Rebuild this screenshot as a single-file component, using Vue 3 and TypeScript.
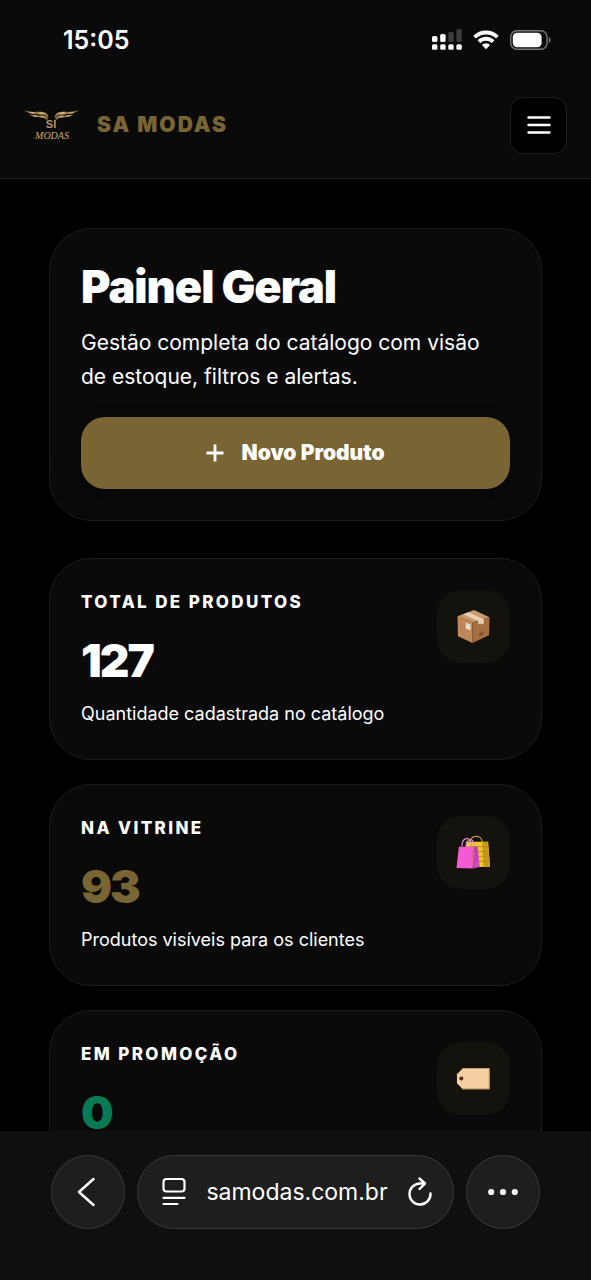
<script setup lang="ts">
import { ref } from 'vue'

type Tone = 'light' | 'gold' | 'green'
type Icon = 'box' | 'bags' | 'tag'

interface Stat {
  label: string
  value: number
  note?: string
  tone: Tone
  icon: Icon
}

const stats: Stat[] = [
  { label: 'Total de produtos', value: 127, note: 'Quantidade cadastrada no catálogo', tone: 'light', icon: 'box' },
  { label: 'Na vitrine', value: 93, note: 'Produtos visíveis para os clientes', tone: 'gold', icon: 'bags' },
  { label: 'Em promoção', value: 0, tone: 'green', icon: 'tag' },
]

const address = ref('samodas.com.br')
</script>

<template>
  <div class="screen">
    <div class="status">
      <time class="clock">15:05</time>
      <div class="indicators">
        <svg class="signal" viewBox="0 0 30 22" aria-hidden="true">
          <g fill="#fff">
            <rect x="0" y="7" width="5.4" height="6" rx="1.6" />
            <rect x="8.2" y="5" width="5.4" height="8" rx="1.6" />
            <rect x="0" y="15.2" width="5.4" height="5.6" rx="1.6" />
            <rect x="8.2" y="15.2" width="5.4" height="5.6" rx="1.6" />
            <rect x="16.3" y="15.2" width="5.4" height="5.6" rx="1.6" />
            <rect x="24.4" y="15.2" width="5.4" height="5.6" rx="1.6" />
          </g>
          <g fill="#3c3c3c">
            <rect x="16.3" y="3" width="5.4" height="10" rx="1.6" />
            <rect x="24.4" y="0" width="5.4" height="13" rx="1.6" />
          </g>
        </svg>
        <svg class="wifi" viewBox="0 0 26 20" aria-hidden="true">
          <g fill="none" stroke="#fff" stroke-width="3.8">
            <path d="M1.6 7.2a16.2 16.2 0 0 1 22.8 0" />
            <path d="M5.9 11.7a10 10 0 0 1 14.2 0" />
          </g>
          <path d="M8.9 14.9a5.9 5.9 0 0 1 8.2 0L13 19.2z" fill="#fff" />
        </svg>
        <svg class="battery" viewBox="0 0 41 20" aria-hidden="true">
          <rect x=".7" y=".7" width="36.4" height="18.6" rx="6.2" fill="none" stroke="#777" stroke-width="1.4" />
          <rect x="2.8" y="2.8" width="28.8" height="14.4" rx="4.2" fill="#fff" />
          <path d="M38.8 7v6c2.4-1 2.4-5 0-6z" fill="#777" />
        </svg>
      </div>
    </div>

    <header class="topbar">
      <a class="brand" href="#">
        <svg class="logo" viewBox="0 0 56 34" aria-hidden="true">
          <defs>
            <linearGradient id="gold" x1="0" x2="1" y1="0" y2="0">
              <stop offset="0" stop-color="#7d6330" />
              <stop offset=".35" stop-color="#d9bd82" />
              <stop offset=".5" stop-color="#8a6c36" />
              <stop offset=".7" stop-color="#cfb073" />
              <stop offset="1" stop-color="#8a6c36" />
            </linearGradient>
          </defs>
          <g fill="url(#gold)">
            <path d="M0 2c7 3.600 16 .6 21 2.600 3 1.400 4 3.400 3 6-1.500-3-3-3.600-7-4C12 6.200 5 6.200 0 2z" />
            <path d="M5 6c6 2.200 12 .8 16 2.200 2.600 1 3 2.600 2.400 4.600-1.600-2.600-3.400-3.200-6.400-3.400C11.500 9.300 8.500 9 5 6z" />
            <path d="M55 2c-7 3.600-16 .6-21 2.600-3 1.400-4 3.400-3 6 1.500-3 3-3.600 7-4C43 6.200 50 6.200 55 2z" />
            <path d="M50 6c-6 2.200-12 .8-16 2.200-2.600 1-3 2.600-2.400 4.600 1.600-2.600 3.400-3.200 6.400-3.400 5.500-.1 8.500-.4 12-3.400z" />
          </g>
          <text class="logo-mark" x="27" y="20" text-anchor="middle">SI</text>
          <text class="logo-name" x="28" y="31" text-anchor="middle">MODAS</text>
        </svg>
        <span class="brand-name">SA MODAS</span>
      </a>
      <button class="menu" type="button" aria-label="Abrir menu">
        <svg viewBox="0 0 24 20" aria-hidden="true">
          <path d="M1.500 2.500h21M1.500 10h21M1.500 17.500h21" fill="none" stroke="#fff" stroke-width="2.400" stroke-linecap="round" />
        </svg>
      </button>
    </header>

    <main class="content">
      <section class="card intro">
        <h1>Painel Geral</h1>
        <p>Gestão completa do catálogo com visão de estoque, filtros e alertas.</p>
        <button class="primary" type="button">
          <svg viewBox="0 0 18 18" aria-hidden="true">
            <path d="M9 .5v17M.5 9h17" fill="none" stroke="#fff" stroke-width="2.800" />
          </svg>
          <span>Novo Produto</span>
        </button>
      </section>

      <section class="stats">
        <article v-for="stat in stats" :key="stat.label" class="card stat">
          <div class="figures">
            <h2>{{ stat.label }}</h2>
            <strong :class="stat.tone">{{ stat.value }}</strong>
            <p v-if="stat.note">{{ stat.note }}</p>
          </div>
          <div class="tile">
            <svg v-if="stat.icon === 'box'" viewBox="0 0 36 36" aria-hidden="true">
              <path d="M1.500 7.500 17 13.500V35L2 28z" fill="#bd8757" />
              <path d="M17 13.500 34.500 8.500 34 27 17 35z" fill="#a56f42" />
              <path d="M1.500 7.500 18.500 1 34.500 8.500 17 13.500z" fill="#c99a6c" />
              <path d="m7.500 5.500 5.500-2.200 15.500 7.200v4.500l-2 1-1.500-1-2 1v-3.700z" fill="#e8d0b4" />
              <path d="m10 14 5 2v6l-5-2z" fill="#e6dccd" />
              <path d="m24 25 4-2v3l-4 2z" fill="#7c4c2b" />
              <path d="M17 13.500V35" stroke="#8b5a34" stroke-width=".8" />
            </svg>
            <svg v-else-if="stat.icon === 'bags'" viewBox="0 0 36 36" aria-hidden="true">
              <path d="M14 8c1-8 12-9 13-1" fill="none" stroke="#c0903a" stroke-width="1.300" />
              <path d="M10 7h23l2 26H14z" fill="#f0c72d" />
              <path d="M27 7h6l2 26h-7z" fill="#c79a1e" />
              <path d="M14 12h19M15 17h18M16 22h18M17 27h17" stroke="#b88919" stroke-width=".9" />
              <path d="M6 12c0-10 9-12 10-1M10 12c1-9 8-10 9-1" fill="none" stroke="#d894bd" stroke-width="1.300" />
              <path d="M3 12h14v22.500L.5 34z" fill="#f45ad3" />
              <path d="M17 12h5.500l2 21-7.500 1.500z" fill="#d14abd" />
              <path d="m20 12 1 11-4 11.500" fill="none" stroke="#9d3089" stroke-width=".8" />
            </svg>
            <svg v-else viewBox="0 0 36 36" aria-hidden="true">
              <path d="M7 7.500h27.500v21.500H7l-6-6v-9.500z" fill="#f5cfa0" />
              <path d="M34 8v20.500H7" fill="none" stroke="#c99b69" stroke-width="1" />
              <circle cx="5.500" cy="18" r="2.100" fill="#5b2618" />
            </svg>
          </div>
        </article>
      </section>
    </main>

    <nav class="browser" aria-label="Navegador">
      <button class="round" type="button" aria-label="Voltar">
        <svg viewBox="0 0 30 30" aria-hidden="true">
          <path d="M20.500 2 6 15l14.500 13" fill="none" stroke="#fff" stroke-width="2.500" stroke-linecap="round" stroke-linejoin="round" />
        </svg>
      </button>
      <div class="address">
        <button class="tool" type="button" aria-label="Opções da página">
          <svg viewBox="0 0 26 30" aria-hidden="true">
            <g fill="none" stroke="#fff" stroke-width="2.200" stroke-linecap="round">
              <rect x="2.500" y="2" width="21" height="12.500" rx="3" />
              <path d="M2.500 20.800h21M2.500 27h14" />
            </g>
          </svg>
        </button>
        <input v-model="address" type="text" aria-label="Endereço" />
        <button class="tool" type="button" aria-label="Recarregar">
          <svg viewBox="0 0 26 30" aria-hidden="true">
            <g fill="none" stroke="#fff" stroke-width="2.400" stroke-linecap="round" stroke-linejoin="round">
              <path d="M23.500 16.500A10.500 10.500 0 1 1 13 6.500h4.500" />
              <path d="m12.500 1.500 5.500 5-5.500 5.500" />
            </g>
          </svg>
        </button>
      </div>
      <button class="round" type="button" aria-label="Mais opções">
        <svg viewBox="0 0 30 30" aria-hidden="true">
          <g fill="#fff">
            <circle cx="3.200" cy="15" r="3.100" />
            <circle cx="15" cy="15" r="3.100" />
            <circle cx="26.800" cy="15" r="3.100" />
          </g>
        </svg>
      </button>
    </nav>
  </div>
</template>

<style>
body {
  background: #000;
}
</style>

<style scoped>
* {
  box-sizing: border-box;
}

.screen {
  display: flex;
  flex-direction: column;
  height: 100vh;
  overflow: hidden;
  background: #000;
  color: #fff;
  font-family: Inter, "Liberation Sans", sans-serif;
}

h1,
h2,
p {
  margin: 0;
}

button,
input {
  padding: 0;
  border: 0;
  background: none;
  color: inherit;
  font: inherit;
}

svg {
  display: block;
}

.status {
  flex: none;
  display: flex;
  justify-content: space-between;
  align-items: center;
  height: 80px;
  padding: 0 40px 0 63px;
  background: #0a0a0a;
}

.clock {
  font-size: 25px;
  line-height: 32px;
  font-weight: 600;
}

.indicators {
  display: flex;
  align-items: center;
  gap: 11px;
}

.signal {
  width: 30px;
  height: 22px;
}

.wifi {
  width: 26px;
  height: 20px;
}

.battery {
  width: 41px;
  height: 20px;
}

.topbar {
  flex: none;
  display: flex;
  justify-content: space-between;
  align-items: center;
  height: 99px;
  padding: 0 24px 8px;
  border-bottom: 1px solid #1c1c1c;
  background: #0a0a0a;
}

.brand {
  display: flex;
  align-items: center;
  gap: 17px;
  color: #796534;
  text-decoration: none;
}

.logo {
  width: 56px;
  height: 34px;
}

.logo-mark {
  fill: #b3945a;
  font: 700 11px "Liberation Sans", sans-serif;
}

.logo-name {
  fill: #c9ab70;
  font: italic 400 10px "Liberation Serif", serif;
}

.brand-name {
  font-size: 21px;
  line-height: 28px;
  font-weight: 900;
  letter-spacing: 2px;
}

.menu {
  display: grid;
  place-items: center;
  width: 57px;
  height: 57px;
  border: 1px solid #1f1f1f;
  border-radius: 13px;
  background: #000;
}

.menu svg {
  width: 24px;
  height: 20px;
}

.content {
  flex: 1;
  min-height: 0;
  overflow: hidden;
  padding: 49px 49px 0;
}

.card {
  border: 1px solid #1c1c1c;
  border-radius: 42px;
  background: #0a0a0a;
}

.intro {
  padding: 31px;
}

h1 {
  font-size: 45px;
  line-height: 54px;
  font-weight: 900;
  letter-spacing: -1px;
}

.intro p {
  max-width: 420px;
  margin-top: 12px;
  font-size: 21px;
  line-height: 34px;
}

.primary {
  display: flex;
  justify-content: center;
  align-items: center;
  gap: 17px;
  width: 100%;
  height: 72px;
  margin-top: 23px;
  border-radius: 24px;
  background: #796534;
  box-shadow: 0 12px 24px rgba(0, 0, 0, 0.25);
  font-size: 21px;
  line-height: 28px;
  font-weight: 900;
}

.primary svg {
  width: 18px;
  height: 18px;
}

.stats {
  display: grid;
  gap: 24px;
  margin-top: 37px;
}

.stat {
  display: flex;
  justify-content: space-between;
  align-items: flex-start;
  min-height: 202px;
  padding: 31px;
}

h2 {
  font-size: 17px;
  line-height: 24px;
  font-weight: 800;
  letter-spacing: 0.14em;
  text-transform: uppercase;
}

strong {
  display: block;
  margin-top: 28px;
  font-size: 46px;
  line-height: 36px;
  font-weight: 900;
  letter-spacing: -2px;
}

.light {
  color: #fff;
}

.gold {
  color: #796534;
}

.green {
  color: #087a55;
}

.stat p {
  margin-top: 24px;
  font-size: 18px;
  line-height: 24px;
}

.tile {
  flex: none;
  display: grid;
  place-items: center;
  width: 73px;
  height: 73px;
  border-radius: 24px;
  background: #13120d;
}

.tile svg {
  width: 35px;
  height: 35px;
}

.browser {
  flex: none;
  display: flex;
  align-items: flex-start;
  gap: 12px;
  height: 149px;
  padding: 24px 51px 0;
  background: #0f0f0f;
}

.round {
  flex: none;
  display: grid;
  place-items: center;
  width: 74px;
  height: 74px;
  border: 1px solid #3a3a3a;
  border-radius: 50%;
  background: #1e1e1e;
}

.round svg {
  width: 30px;
  height: 30px;
}

.address {
  flex: 1;
  min-width: 0;
  display: flex;
  align-items: center;
  height: 74px;
  padding: 0 20px 0 23px;
  border: 1px solid #3a3a3a;
  border-radius: 37px;
  background: #1e1e1e;
}

.address input {
  flex: 1;
  min-width: 0;
  width: 100%;
  font-size: 23px;
  line-height: 32px;
  text-align: center;
}

.tool {
  flex: none;
}

.tool svg {
  width: 26px;
  height: 30px;
}
</style>
